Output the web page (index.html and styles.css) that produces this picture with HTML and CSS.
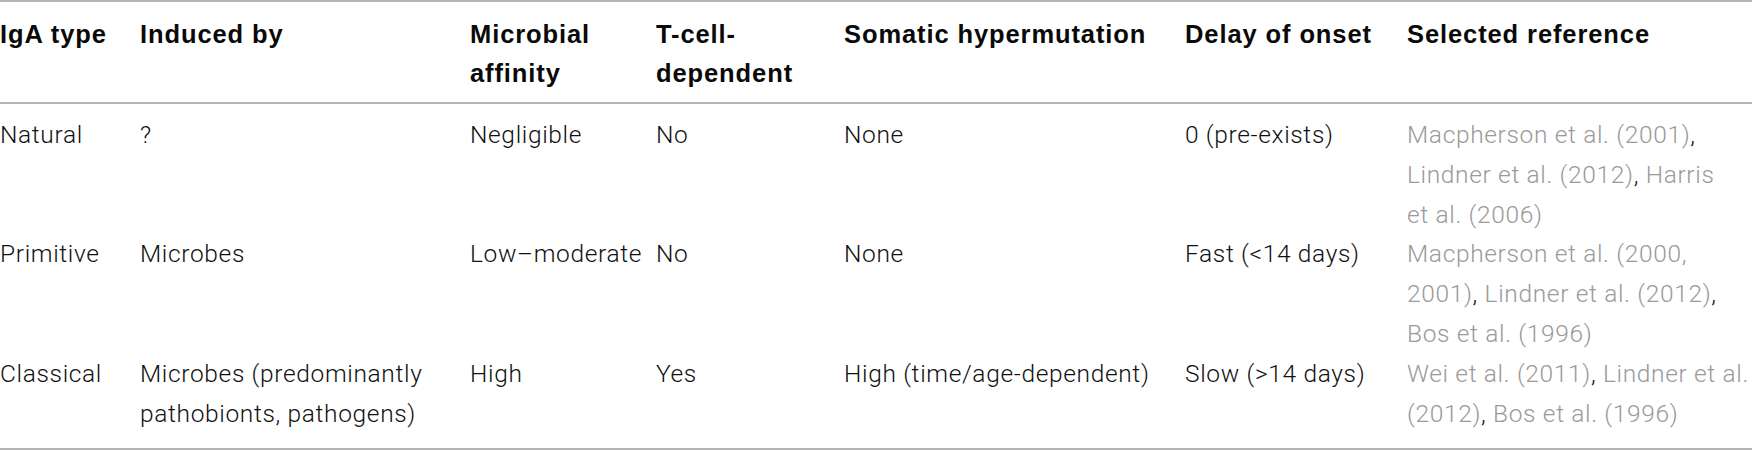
FILE: index.html
```html
<!DOCTYPE html>
<html lang="en">
<head>
<meta charset="utf-8">
<title>IgA types</title>
<link rel="stylesheet" href="styles.css">
</head>
<body>
<table class="tbl">
  <colgroup>
    <col class="c1"><col class="c2"><col class="c3"><col class="c4"><col class="c5"><col class="c6"><col class="c7">
  </colgroup>
  <thead>
    <tr>
      <th>IgA type</th>
      <th>Induced by</th>
      <th>Microbial affinity</th>
      <th>T-cell-dependent</th>
      <th>Somatic hypermutation</th>
      <th>Delay of onset</th>
      <th>Selected reference</th>
    </tr>
  </thead>
  <tbody>
    <tr class="first">
      <td>Natural</td>
      <td>?</td>
      <td>Negligible</td>
      <td>No</td>
      <td>None</td>
      <td>0 (pre-exists)</td>
      <td><span class="ref">Macpherson et&nbsp;al. (2001)</span>, <span class="ref">Lindner et&nbsp;al. (2012)</span>, <span class="ref">Harris et&nbsp;al. (2006)</span></td>
    </tr>
    <tr>
      <td>Primitive</td>
      <td>Microbes</td>
      <td>Low–moderate</td>
      <td>No</td>
      <td>None</td>
      <td>Fast (&lt;14 days)</td>
      <td><span class="ref">Macpherson et&nbsp;al. (2000, 2001)</span>, <span class="ref">Lindner et&nbsp;al. (2012)</span>, <span class="ref">Bos et&nbsp;al. (1996)</span></td>
    </tr>
    <tr class="last">
      <td>Classical</td>
      <td>Microbes (predominantly pathobionts, pathogens)</td>
      <td>High</td>
      <td>Yes</td>
      <td>High (time/age-dependent)</td>
      <td>Slow (&gt;14 days)</td>
      <td><span class="ref">Wei et&nbsp;al. (2011)</span>, <span class="ref">Lindner et&nbsp;al. (2012)</span>, <span class="ref">Bos et&nbsp;al. (1996)</span></td>
    </tr>
  </tbody>
</table>
</body>
</html>
```
FILE: styles.css
```css
html, body {
  margin: 0;
  padding: 0;
  background: #ffffff;
}

.tbl {
  width: 1752px;
  table-layout: fixed;
  border-collapse: collapse;
  border-top: 2px solid #b4b4b4;
  border-bottom: 2px solid #b4b4b4;
  font-family: "Roboto", "Liberation Sans", sans-serif;
  font-weight: 300;
  font-size: 24.5px;
  letter-spacing: 0.65px;
  color: #111111;
}

.c1 { width: 140px; }
.c2 { width: 330px; }
.c3 { width: 186px; }
.c4 { width: 188px; }
.c5 { width: 341px; }
.c6 { width: 222px; }
.c7 { width: 345px; }

.tbl th {
  font-family: "Liberation Sans", Arial, sans-serif;
  font-weight: 700;
  font-size: 25.5px;
  letter-spacing: 0.9px;
  text-align: left;
  vertical-align: top;
  line-height: 39px;
  padding: 13px 6px 9px 0;
  border-bottom: 2px solid #b4b4b4;
  color: #0a0a0a;
}

.tbl td {
  vertical-align: top;
  line-height: 39.8px;
  padding: 0 6px 0 0;
}

.tbl td:last-child,
.tbl th:last-child {
  padding-right: 0;
}

.tbl tr.first td { padding-top: 11px; }
.tbl tr.last td { padding-bottom: 15px; }

.ref {
  color: #9a9a9a;
}
```
